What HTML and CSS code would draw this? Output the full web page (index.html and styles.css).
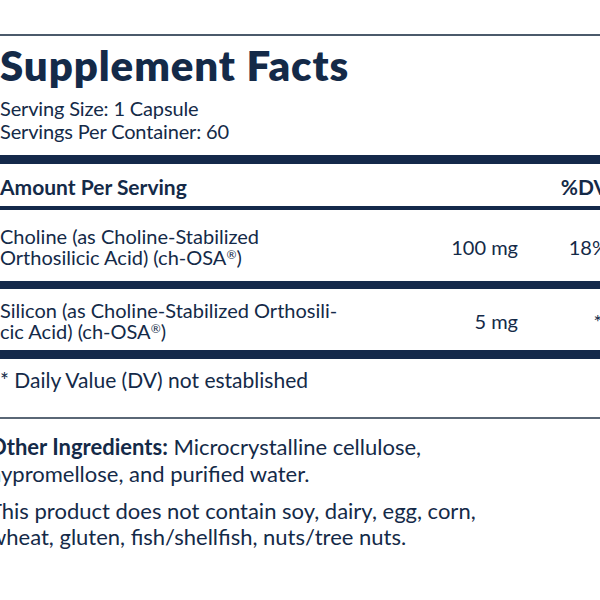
FILE: index.html
```html
<!DOCTYPE html>
<html lang="en">
<head>
<meta charset="utf-8">
<title>Supplement Facts</title>
<link rel="stylesheet" href="styles.css">
</head>
<body>
<div class="label">
  <div class="rule-thin"></div>
  <h1 class="title">Supplement Facts</h1>
  <div class="serving">
    <div>Serving Size: 1 Capsule</div>
    <div>Servings Per Container: 60</div>
  </div>
  <div class="bar bar-9"></div>
  <div class="row head">
    <div class="name">Amount Per Serving</div>
    <div class="amt"></div>
    <div class="dv">%DV</div>
  </div>
  <div class="bar bar-4"></div>
  <div class="row item item-choline">
    <div class="name">Choline (as Choline-Stabilized<br>Orthosilicic Acid) (ch-OSA<sup class="reg">®</sup>)</div>
    <div class="amt">100 mg</div>
    <div class="dv">18%</div>
  </div>
  <div class="bar bar-8"></div>
  <div class="row item item-silicon">
    <div class="name">Silicon (as Choline-Stabilized Orthosili-<br>cic Acid) (ch-OSA<sup class="reg">®</sup>)</div>
    <div class="amt">5 mg</div>
    <div class="dv dv-star">*</div>
  </div>
  <div class="bar bar-9"></div>
  <div class="foot">* Daily Value (DV) not established</div>
  <div class="rule-thin rule-light"></div>
  <div class="other">
    <p><strong>Other Ingredients:</strong> Microcrystalline cellulose,<br>hypromellose, and purified water.</p>
    <p>This product does not contain soy, dairy, egg, corn,<br>wheat, gluten, fish/shellfish, nuts/tree nuts.</p>
  </div>
</div>
</body>
</html>
```
FILE: styles.css
```css
html, body {
  margin: 0;
  padding: 0;
}
body {
  width: 600px;
  height: 600px;
  overflow: hidden;
  background: #ffffff;
  color: #142a48;
  font-family: Lato, "Liberation Sans", sans-serif;
}
.label {
  width: 608px;
  padding-top: 34px;
}
.rule-thin {
  height: 2px;
  background: #4b5a6b;
}
.rule-light {
  background: #5a6776;
}
.title {
  margin: 9px 0 12px;
  font-size: 42px;
  line-height: 40px;
  font-weight: 800;
  letter-spacing: 0.9px;
}
.serving {
  font-size: 20px;
  line-height: 22.5px;
  letter-spacing: -0.15px;
  margin-bottom: 13px;
}
.bar {
  background: #14294a;
}
.bar-9 { height: 9px; }
.bar-8 { height: 8px; }
.bar-4 { height: 4px; }
.row {
  display: grid;
  grid-template-columns: 1fr 100px 90px;
  align-items: center;
  font-size: 20px;
}
.row .amt,
.row .dv {
  text-align: right;
  white-space: nowrap;
}
.row .dv-star {
  padding-right: 6px;
}
.head {
  font-weight: 700;
  font-size: 21px;
  line-height: 22px;
  padding: 12px 0 8px;
}
.item {
  line-height: 21px;
}
.item-choline {
  padding: 16px 0 13px;
}
.item-silicon {
  padding: 11px 0 8px;
}
.reg {
  font-size: 0.6em;
  line-height: 0;
  vertical-align: 0.5em;
}
.foot {
  font-size: 21px;
  line-height: 22px;
  padding: 10px 0 26px;
}
.other {
  margin-left: -11px;
  padding-top: 15px;
  font-size: 22px;
  line-height: 26.5px;
}
.other p {
  margin: 0 0 10.5px;
}
.other strong {
  font-weight: 700;
}
```
